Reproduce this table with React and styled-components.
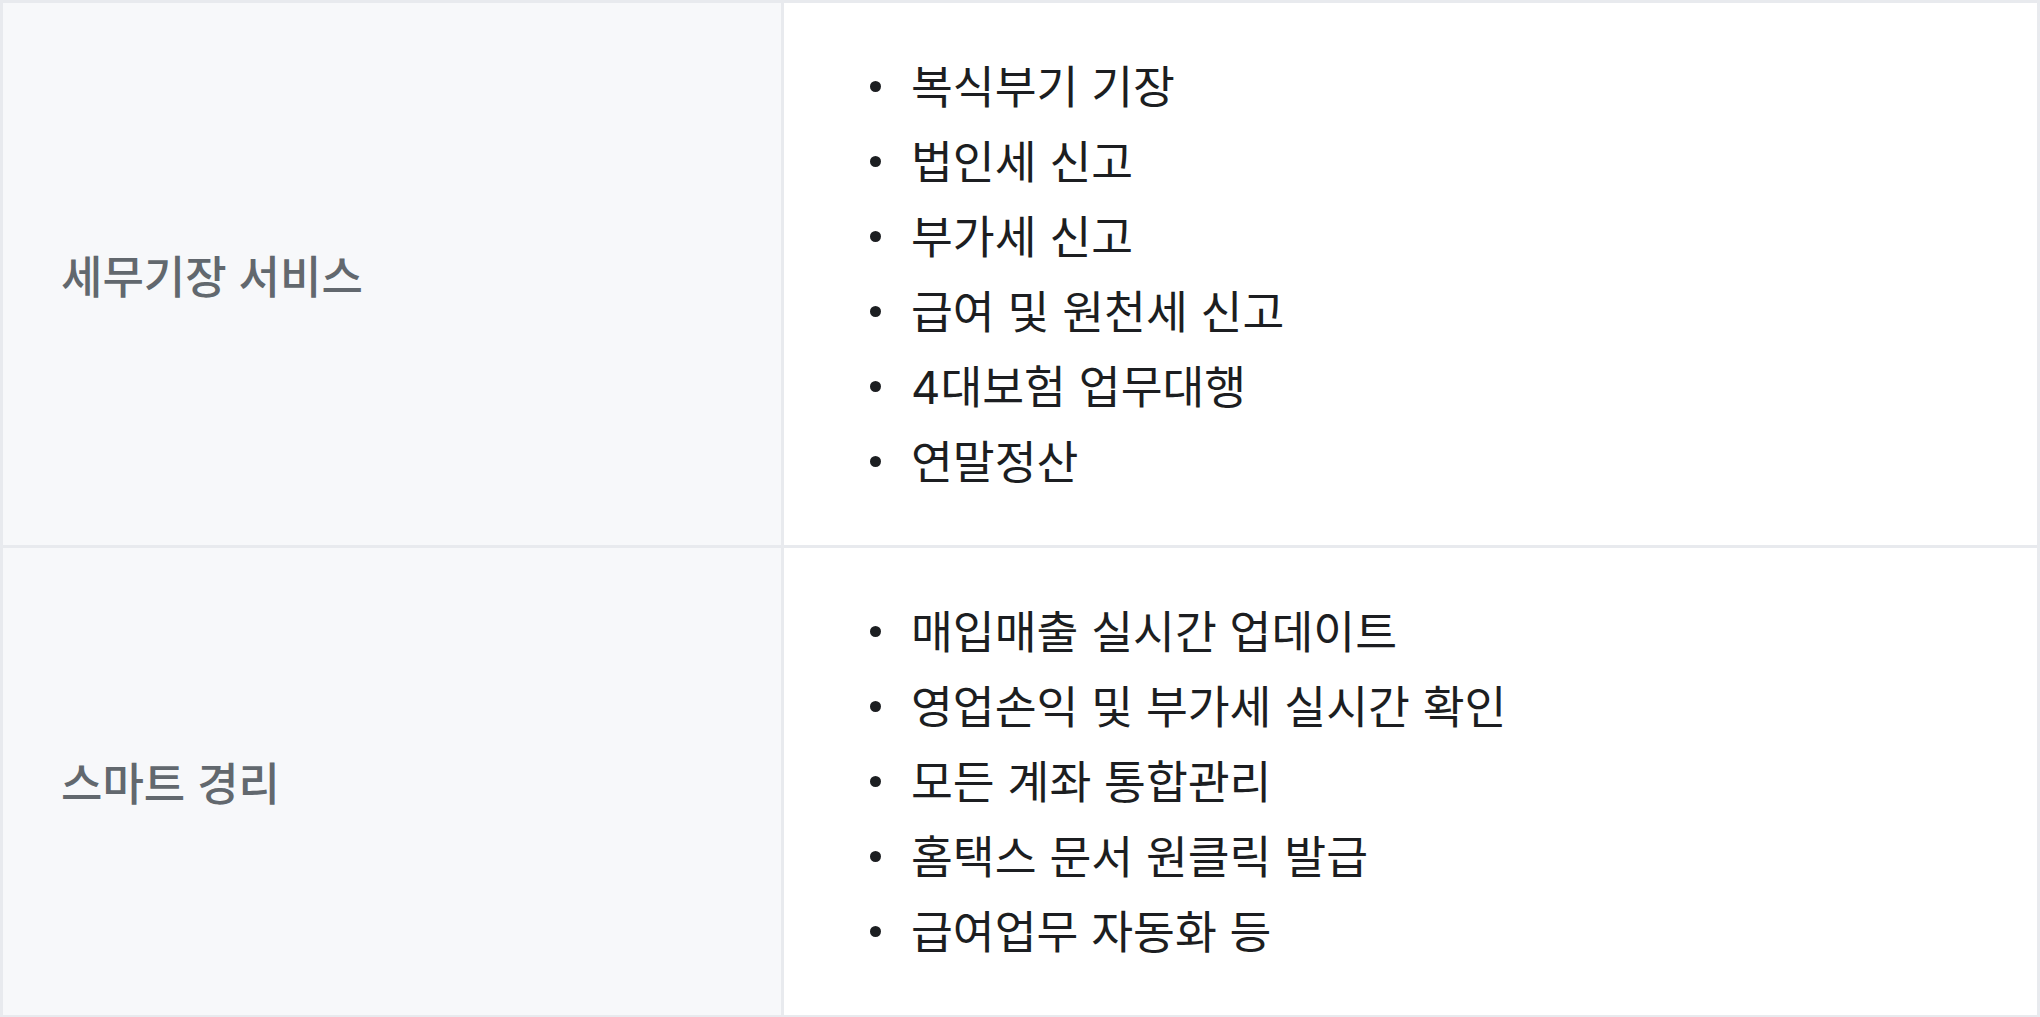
import React from "react";
import styled, { createGlobalStyle } from "styled-components";

const GlobalStyle = createGlobalStyle`
  html, body {
    margin: 0;
    padding: 0;
    background: #ffffff;
  }
  body {
    font-family: Inter, "Noto Sans CJK KR", "Noto Sans", sans-serif;
    -webkit-font-smoothing: antialiased;
  }
`;

const Table = styled.div`
  width: 2040px;
  box-sizing: border-box;
  border: 3px solid #e8eaee;
  display: flex;
  flex-direction: column;
`;

const Row = styled.div`
  display: grid;
  grid-template-columns: 781px 1fr;
  border-top: ${(p) => (p.$first ? "none" : "3px solid #e8eaee")};
`;

const Label = styled.div`
  background: #f7f8fa;
  border-right: 3px solid #e8eaee;
  display: flex;
  align-items: center;
  padding-left: 58px;
  font-family: Inter, "Noto Sans CJK KR", sans-serif;
  font-size: 45px;
  font-weight: 500;
  color: #62686e;
`;

const Cell = styled.div`
  padding: 43px 0 49px 86px;
`;

const List = styled.ul`
  list-style: none;
  margin: 0;
  padding: 0;
`;

const Item = styled.li`
  display: flex;
  align-items: center;
  height: 75px;
  font-family: Inter, "Noto Sans CJK KR", sans-serif;
  font-size: 45.5px;
  font-weight: 400;
  color: #1c1e21;
  white-space: nowrap;
`;

const Dot = styled.span`
  width: 11px;
  height: 11px;
  border-radius: 50%;
  background: #1c1e21;
  margin-right: 30px;
  flex: none;
  position: relative;
  top: 3px;
`;

const rows = [
  {
    label: "세무기장 서비스",
    items: [
      "복식부기 기장",
      "법인세 신고",
      "부가세 신고",
      "급여 및 원천세 신고",
      "4대보험 업무대행",
      "연말정산",
    ],
  },
  {
    label: "스마트 경리",
    items: [
      "매입매출 실시간 업데이트",
      "영업손익 및 부가세 실시간 확인",
      "모든 계좌 통합관리",
      "홈택스 문서 원클릭 발급",
      "급여업무 자동화 등",
    ],
  },
];

export default function App() {
  return (
    <>
      <GlobalStyle />
      <Table>
        {rows.map((r, i) => (
          <Row key={r.label} $first={i === 0}>
            <Label>{r.label}</Label>
            <Cell>
              <List>
                {r.items.map((t) => (
                  <Item key={t}>
                    <Dot />
                    {t}
                  </Item>
                ))}
              </List>
            </Cell>
          </Row>
        ))}
      </Table>
    </>
  );
}
